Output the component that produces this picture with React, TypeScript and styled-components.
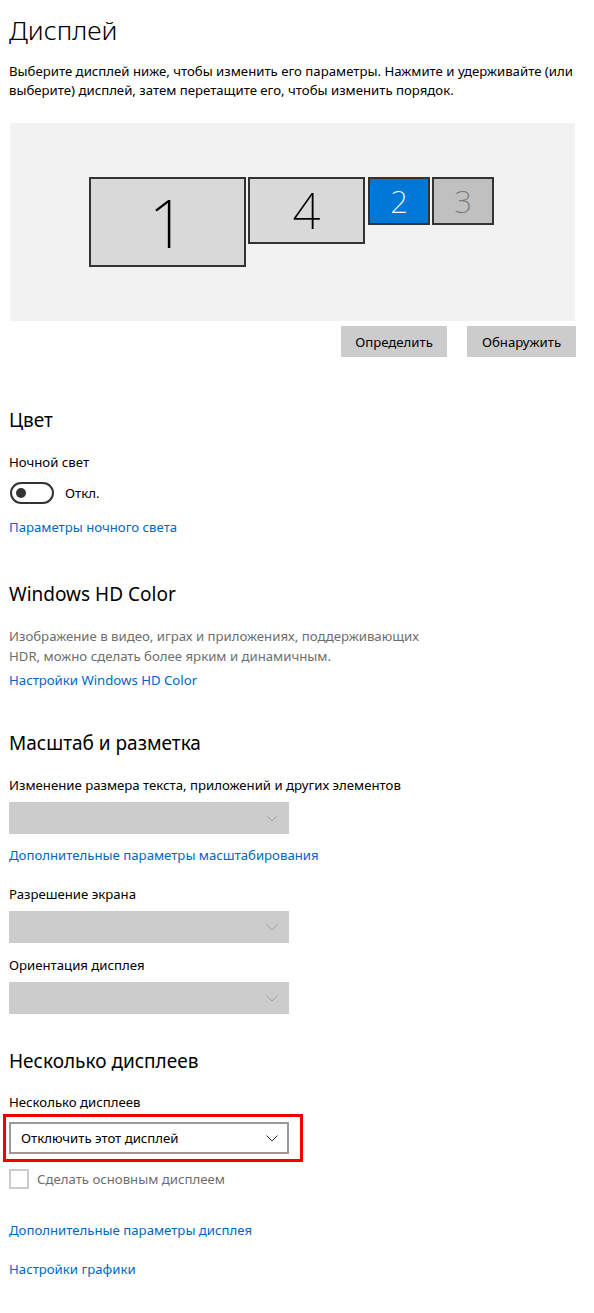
import React from "react";
import styled, { createGlobalStyle } from "styled-components";

const Global = createGlobalStyle`
  html, body { margin: 0; padding: 0; background: #ffffff; }
  body { font-family: "Noto Sans", "Open Sans", sans-serif; color: #000; }
  * { box-sizing: border-box; }
`;

const Page = styled.div`
  width: 594px;
  padding: 12px 17px 40px 9px;
  display: flex;
  flex-direction: column;
`;

const Title = styled.h1`
  margin: 0;
  font-size: 26.5px;
  line-height: 36px;
  font-weight: 300;
  color: #000;
`;

const Text = styled.p<{ $mt?: number; $muted?: boolean; $lh?: number }>`
  margin: ${(p) => p.$mt ?? 0}px 0 0 0;
  font-size: 13.2px;
  line-height: ${(p) => p.$lh ?? 19}px;
  color: ${(p) => (p.$muted ? "#6e6e6e" : "#000")};
`;

const SectionTitle = styled.h2<{ $mt: number }>`
  margin: ${(p) => p.$mt}px 0 0 0;
  font-size: 19px;
  line-height: 28px;
  font-weight: 400;
  color: #000;
`;

const Link = styled.a<{ $mt: number }>`
  display: block;
  margin-top: ${(p) => p.$mt}px;
  font-size: 13.2px;
  line-height: 19px;
  color: #0067c0;
  text-decoration: none;
`;

const Arrangement = styled.div`
  margin: 23px 0 0 1px;
  width: 565px;
  height: 198px;
  background: #f2f2f2;
  display: flex;
  align-items: flex-start;
  padding: 54px 0 0 79px;
  gap: 2px;
`;

const Monitor = styled.div<{ $w: number; $h: number; $active?: boolean; $dim?: boolean; $fs: number; $ml?: number }>`
  width: ${(p) => p.$w}px;
  height: ${(p) => p.$h}px;
  margin-left: ${(p) => p.$ml ?? 0}px;
  border: 2px solid #333;
  background: ${(p) => (p.$active ? "#0078d7" : p.$dim ? "#c0c0c0" : "#d9d9d9")};
  color: ${(p) => (p.$active ? "#fff" : p.$dim ? "#7a7a7a" : "#000")};
  display: flex;
  align-items: center;
  justify-content: center;
  font-size: ${(p) => p.$fs}px;
  font-weight: 200;
  line-height: 1;
  overflow: hidden;
`;

const ButtonRow = styled.div`
  margin: 5px 1px 0 0;
  display: flex;
  justify-content: flex-end;
  gap: 20px;
`;

const Button = styled.button<{ $w: number }>`
  width: ${(p) => p.$w}px;
  height: 31px;
  border: none;
  background: #cccccc;
  font-family: inherit;
  font-size: 13.2px;
  color: #000;
  padding: 0;
`;

const ToggleRow = styled.div`
  margin-top: 10px;
  display: flex;
  align-items: center;
  gap: 11px;
  height: 22px;
`;

const Toggle = styled.div`
  width: 44px;
  height: 22px;
  border: 2px solid #333;
  border-radius: 11px;
  margin-left: 1px;
  display: flex;
  align-items: center;
  padding-left: 4px;
`;

const Knob = styled.div`
  width: 10px;
  height: 10px;
  border-radius: 50%;
  background: #333;
`;

const ToggleLabel = styled.span`
  font-size: 13.2px;
  color: #000;
`;

const Select = styled.div<{ $mt: number; $disabled?: boolean }>`
  margin-top: ${(p) => p.$mt}px;
  width: 280px;
  height: 32px;
  background: ${(p) => (p.$disabled ? "#cccccc" : "#fff")};
  border: ${(p) => (p.$disabled ? "none" : "2px solid #999")};
  display: flex;
  align-items: center;
  justify-content: space-between;
  padding: 0 ${(p) => (p.$disabled ? 11 : 9)}px 0 ${(p) => (p.$disabled ? 12 : 10)}px;
  font-size: 13.2px;
  color: #000;
`;

const Highlight = styled.div`
  margin: 2px 0 0 -6px;
  width: 300px;
  border: 3px solid #f00000;
  padding: 5px 0 5px 3px;
`;

const CheckRow = styled.div`
  margin-top: 7px;
  display: flex;
  align-items: center;
  gap: 8px;
  height: 20px;
`;

const CheckBox = styled.div`
  width: 20px;
  height: 20px;
  border: 2px solid #cccccc;
`;

const Chevron = ({ color }: { color: string }) => (
  <svg width="12" height="7" viewBox="0 0 12 7" fill="none">
    <path d="M0.5 0.5 L6 6 L11.5 0.5" stroke={color} strokeWidth="1" />
  </svg>
);

export default function App() {
  return (
    <>
      <Global />
      <Page>
        <Title>Дисплей</Title>
        <Text $mt={14}>
          Выберите дисплей ниже, чтобы изменить его параметры. Нажмите и удерживайте (или выберите) дисплей, затем
          перетащите его, чтобы изменить порядок.
        </Text>
        <Arrangement>
          <Monitor $w={157} $h={90} $fs={66}>1</Monitor>
          <Monitor $w={117} $h={67} $fs={49}>4</Monitor>
          <Monitor $w={62} $h={48} $fs={31} $active $ml={1}>2</Monitor>
          <Monitor $w={62} $h={48} $fs={31} $dim>3</Monitor>
        </Arrangement>
        <ButtonRow>
          <Button $w={106}>Определить</Button>
          <Button $w={109}>Обнаружить</Button>
        </ButtonRow>

        <SectionTitle $mt={49}>Цвет</SectionTitle>
        <Text $mt={19}>Ночной свет</Text>
        <ToggleRow>
          <Toggle>
            <Knob />
          </Toggle>
          <ToggleLabel>Откл.</ToggleLabel>
        </ToggleRow>
        <Link $mt={14}>Параметры ночного света</Link>

        <SectionTitle $mt={43}>Windows HD Color</SectionTitle>
        <Text $mt={18} $muted $lh={20}>
          Изображение в видео, играх и приложениях, поддерживающих
          <br />
          HDR, можно сделать более ярким и динамичным.
        </Text>
        <Link $mt={5}>Настройки Windows HD Color</Link>

        <SectionTitle $mt={39}>Масштаб и разметка</SectionTitle>
        <Text $mt={19}>Изменение размера текста, приложений и других элементов</Text>
        <Select $mt={7} $disabled>
          <span />
          <Chevron color="#a0a0a0" />
        </Select>
        <Link $mt={12}>Дополнительные параметры масштабирования</Link>
        <Text $mt={20}>Разрешение экрана</Text>
        <Select $mt={7} $disabled>
          <span />
          <Chevron color="#a0a0a0" />
        </Select>
        <Text $mt={13}>Ориентация дисплея</Text>
        <Select $mt={7} $disabled>
          <span />
          <Chevron color="#a0a0a0" />
        </Select>

        <SectionTitle $mt={33}>Несколько дисплеев</SectionTitle>
        <Text $mt={18}>Несколько дисплеев</Text>
        <Highlight>
          <Select $mt={0}>
            <span>Отключить этот дисплей</span>
            <Chevron color="#333" />
          </Select>
        </Highlight>
        <CheckRow>
          <CheckBox />
          <Text $muted>Сделать основным дисплеем</Text>
        </CheckRow>
        <Link $mt={32}>Дополнительные параметры дисплея</Link>
        <Link $mt={20}>Настройки графики</Link>
      </Page>
    </>
  );
}
